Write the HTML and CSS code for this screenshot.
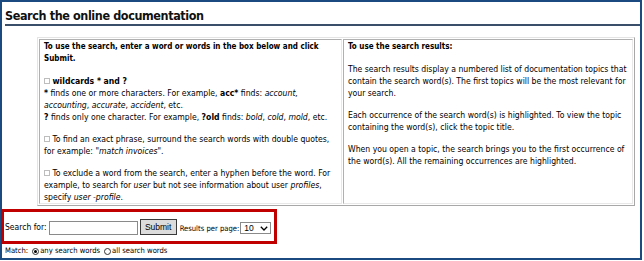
FILE: index.html
```html
<!DOCTYPE html>
<html>
<head>
<meta charset="utf-8">
<link rel="stylesheet" href="styles.css">
</head>
<body>
<div class="frame">
  <h1 class="title">Search the online documentation</h1>
  <div class="doc-table">
    <div class="cell cell-left">
      <p class="lead">To use the search, enter a word or words in the box below and click<br>Submit.</p>
      <p><span class="box"></span> <b>wildcards * and ?</b><br>
        <b>*</b> finds one or more characters. For example, <b>acc*</b> finds: <i>account,</i><br>
        <i>accounting</i>, <i>accurate</i>, <i>accident</i>, etc.<br>
        <b>?</b> finds only one character. For example, <b>?old</b> finds: <i>bold</i>, <i>cold</i>, <i>mold</i>, etc.</p>
      <p><span class="box"></span> To find an exact phrase, surround the search words with double quotes,<br>
        for example: "<i>match invoices</i>".</p>
      <p><span class="box"></span> To exclude a word from the search, enter a hyphen before the word. For<br>
        example, to search for <i>user</i> but not see information about user <i>profiles</i>,<br>
        specify <i>user -profile</i>.</p>
    </div>
    <div class="cell cell-right">
      <p class="lead">To use the search results:</p>
      <p>The search results display a numbered list of documentation topics that<br>
        contain the search word(s). The first topics will be the most relevant for<br>
        your search.</p>
      <p>Each occurrence of the search word(s) is highlighted. To view the topic<br>
        containing the word(s), click the topic title.</p>
      <p>When you open a topic, the search brings you to the first occurrence of<br>
        the word(s). All the remaining occurrences are highlighted.</p>
    </div>
  </div>
  <div class="search-row">
    <span class="label">Search for:</span>
    <span class="text-input"></span>
    <span class="btn">Submit</span>
    <span class="small-label">Results per page:</span>
    <span class="select">10
      <svg class="chev" width="8" height="5" viewBox="0 0 8 5"><path d="M0.8 0.8 L4 4 L7.2 0.8" fill="none" stroke="#000" stroke-width="1.3"/></svg>
    </span>
  </div>
  <div class="match-row">
    <span>Match:</span>
    <span class="radio on"></span><span>any search words</span>
    <span class="radio"></span><span>all search words</span>
  </div>
</div>
</body>
</html>
```
FILE: styles.css
```css
html, body {
  margin: 0;
  padding: 0;
  background: #fff;
}
body {
  font-family: "DejaVu Sans Condensed", "DejaVu Sans", sans-serif;
  font-stretch: condensed;
  color: #000;
}
.frame {
  box-sizing: border-box;
  width: 642px;
  height: 260px;
  border: 2px solid #1b4a80;
  display: flex;
  flex-direction: column;
}
.title {
  margin: 0 0 0 3px;
  padding: 7px 0 2px 0;
  font-size: 12.5px;
  line-height: 13px;
  letter-spacing: -0.4px;
  font-weight: bold;
  color: #111;
  border-bottom: 2px solid #3a4f6a;
}
.doc-table {
  margin: 11px 0 0 35px;
  width: 598px;
  box-sizing: border-box;
  display: grid;
  grid-template-columns: 303px minmax(0, 1fr);
  gap: 1px;
  padding: 1px;
  border: 1px solid;
  border-color: #e4e4e4 #a8a8a8 #a8a8a8 #e4e4e4;
}
.cell {
  border: 1px solid;
  border-color: #b0b0b0 #e8e8e8 #e8e8e8 #b0b0b0;
  padding: 1px 4px 0 4px;
  font-size: 8.6px;
  line-height: 12px;
  white-space: nowrap;
  overflow: hidden;
}
.cell p {
  margin: 0 0 10px 0;
}
.cell p:last-child {
  margin-bottom: 0;
}
.cell p.lead {
  font-weight: bold;
  font-size: 8px;
}
.box {
  display: inline-block;
  width: 4px;
  height: 4px;
  border: 1px solid #bdbdbd;
  vertical-align: 0;
}
.search-row {
  margin: 3px 0 0 -1px;
  width: 276px;
  height: 35px;
  box-sizing: border-box;
  border: 3px solid #c00000;
  display: flex;
  align-items: center;
  padding-left: 1px;
  font-size: 8.5px;
}
.label {
  margin-right: 2px;
}
.text-input {
  width: 87px;
  height: 12px;
  border: 1px solid #8a8a8a;
  background: #fff;
  margin-top: 2px;
}
.btn {
  margin-left: 2px;
  width: 35px;
  height: 14px;
  border: 1px solid #3a3a3a;
  background: #dcdcdc;
  font-family: "Liberation Sans", sans-serif;
  font-size: 8.5px;
  line-height: 14px;
  text-align: center;
}
.small-label {
  margin-left: 3px;
  font-size: 7.6px;
  margin-top: 4px;
}
.select {
  margin-left: 1px;
  margin-top: 3px;
  width: 24px;
  height: 10px;
  border: 1px solid #8a8a8a;
  font-family: "Liberation Sans", sans-serif;
  font-size: 8.5px;
  line-height: 10px;
  padding-left: 3px;
  padding-right: 2px;
  display: flex;
  align-items: center;
  justify-content: space-between;
}
.chev {
  display: block;
}
.match-row {
  margin: 2px 0 0 3px;
  display: flex;
  align-items: center;
  font-size: 7.6px;
  line-height: 10px;
}
.radio {
  display: inline-block;
  box-sizing: border-box;
  width: 7px;
  height: 7px;
  border: 1px solid #333;
  border-radius: 50%;
  margin: 0 1px 0 4px;
  position: relative;
}
.radio.on::after {
  content: "";
  position: absolute;
  left: 1px;
  top: 1px;
  width: 3px;
  height: 3px;
  border-radius: 50%;
  background: #000;
}
```
